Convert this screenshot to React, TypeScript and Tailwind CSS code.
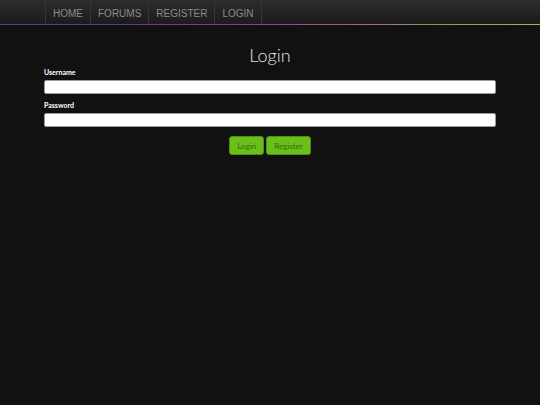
import { useState } from "react"

const navItems = ["HOME", "FORUMS", "REGISTER", "LOGIN"]

export default function App() {
    const [username, setUsername] = useState("")
    const [password, setPassword] = useState("")

    return (
        <div className="min-h-screen bg-[#111111]" style={{ fontFamily: "Lato, 'Open Sans', sans-serif" }}>
            {/* Top nav */}
            <div className="bg-gradient-to-b from-[#2d2d2d] to-[#1b1b1b]">
                <div className="mx-auto flex h-6 w-[452px] pl-px">
                    {navItems.map((item, idx) => (
                        <a
                            key={item}
                            href="#"
                            className={`flex h-full items-center border-l border-[#353535] px-[7px] pt-[3px] text-[10px] text-[#8c8c8c] ${idx === navItems.length - 1 ? "border-r" : ""}`}
                            style={{ fontFamily: "'Liberation Sans', Arial, sans-serif" }}
                        >
                            {item}
                        </a>
                    ))}
                </div>
            </div>
            <div className="h-px bg-[linear-gradient(to_right,#3d5478_0%,#56408a_15%,#7e3494_32%,#a02fa0_46%,#a0508e_58%,#a07a70_72%,#a29a58_86%,#b2b444_100%)]" />

            {/* Login form */}
            <div className="mx-auto w-[452px] pt-[19px]">
                <h1 className="mb-[2px] h-[22px] text-center text-[18px] font-light leading-[22px] text-[#e4e4e4]">Login</h1>

                <label className="mb-[3px] block text-[7px] font-bold leading-[9px] text-white">Username</label>
                <input
                    value={username}
                    onChange={e => setUsername(e.target.value)}
                    className="block h-[14px] w-full rounded-[2px] border border-[#9a9a9a] bg-white px-1 text-[8px] outline-none"
                />

                <label className="mb-[3px] mt-[7px] block text-[7px] font-bold leading-[9px] text-white">Password</label>
                <input
                    type="password"
                    value={password}
                    onChange={e => setPassword(e.target.value)}
                    className="block h-[14px] w-full rounded-[2px] border border-[#9a9a9a] bg-white px-1 text-[8px] outline-none"
                />

                <div className="mt-[9px] flex justify-center gap-[2px]">
                    <button className="h-[19px] rounded-[3px] border border-[#4f9212] bg-[#6abf1b] px-[7px] text-[8px] text-[#3b6b10]">Login</button>
                    <button className="h-[19px] rounded-[3px] border border-[#4f9212] bg-[#6abf1b] px-[7px] text-[8px] text-[#3b6b10]">Register</button>
                </div>
            </div>
        </div>
    )
}
